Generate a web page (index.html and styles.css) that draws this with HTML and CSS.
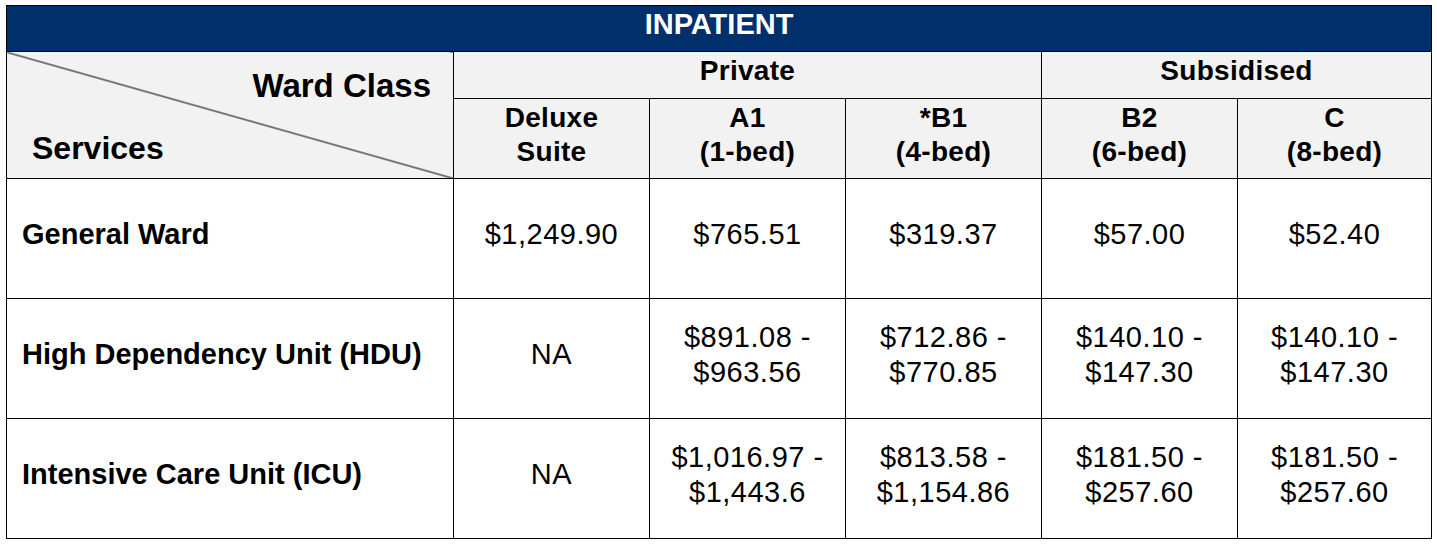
FILE: index.html
```html
<!DOCTYPE html>
<html>
<head>
<meta charset="utf-8">
<link rel="stylesheet" href="styles.css">
</head>
<body>
<table class="rates">
  <colgroup>
    <col class="c-label">
    <col class="c-val">
    <col class="c-val">
    <col class="c-val">
    <col class="c-val">
    <col class="c-last">
  </colgroup>
  <tr class="r-title">
    <th colspan="6" class="title">INPATIENT</th>
  </tr>
  <tr class="r-h1">
    <th rowspan="2" class="corner">
      <div class="wc">Ward Class</div>
      <div class="sv">Services</div>
    </th>
    <th colspan="3" class="grp">Private</th>
    <th colspan="2" class="grp">Subsidised</th>
  </tr>
  <tr class="r-h2">
    <th class="sub">Deluxe<br>Suite</th>
    <th class="sub">A1<br>(1-bed)</th>
    <th class="sub">*B1<br>(4-bed)</th>
    <th class="sub">B2<br>(6-bed)</th>
    <th class="sub">C<br>(8-bed)</th>
  </tr>
  <tr class="r-body">
    <th class="label">General Ward</th>
    <td>$1,249.90</td>
    <td>$765.51</td>
    <td>$319.37</td>
    <td>$57.00</td>
    <td>$52.40</td>
  </tr>
  <tr class="r-body">
    <th class="label">High Dependency Unit (HDU)</th>
    <td>NA</td>
    <td>$891.08 -<br>$963.56</td>
    <td>$712.86 -<br>$770.85</td>
    <td>$140.10 -<br>$147.30</td>
    <td>$140.10 -<br>$147.30</td>
  </tr>
  <tr class="r-body">
    <th class="label">Intensive Care Unit (ICU)</th>
    <td>NA</td>
    <td>$1,016.97 -<br>$1,443.6</td>
    <td>$813.58 -<br>$1,154.86</td>
    <td>$181.50 -<br>$257.60</td>
    <td>$181.50 -<br>$257.60</td>
  </tr>
</table>
</body>
</html>
```

FILE: styles.css
```css
html, body {
  margin: 0;
  padding: 0;
  background: #ffffff;
}

body {
  font-family: "Liberation Sans", Arial, sans-serif;
  color: #000;
}

.rates {
  border-collapse: collapse;
  table-layout: fixed;
  width: 1425px;
  margin: 5px 0 0 6px;
}

.c-label { width: 447px; }
.c-val { width: 196px; }
.c-last { width: 194px; }

.rates th,
.rates td {
  border: 1px solid #000;
  padding: 0 0 8px 0;
  text-align: center;
  vertical-align: middle;
}

.r-title { height: 46px; }
.r-h1 { height: 47px; }
.r-h2 { height: 80px; }
.r-body { height: 120px; }

.title {
  background: #00306b;
  color: #fff;
  font-size: 29px;
  font-weight: bold;
  padding: 0 0 10px 0 !important;
  line-height: 34px;
}

.corner {
  background-color: #f2f2f2;
  background-image: linear-gradient(to top right, transparent calc(50% - 1px), #000 50%, transparent calc(50% + 1px));
  vertical-align: top !important;
  padding: 15px 0 0 0 !important;
  font-size: 33px;
  font-weight: bold;
  line-height: 38px;
}

.wc {
  text-align: right;
  padding-right: 22px;
}

.sv {
  text-align: left;
  padding-left: 25px;
  margin-top: 24px;
  font-size: 32px;
}

.grp {
  background: #f2f2f2;
  font-size: 28px;
  font-weight: bold;
  line-height: 34px;
  letter-spacing: 0.3px;
}

.sub {
  background: #f2f2f2;
  font-size: 28px;
  font-weight: bold;
  line-height: 34px;
  letter-spacing: 0.3px;
}

.label {
  text-align: left !important;
  padding-left: 15px !important;
  font-size: 29px;
  font-weight: bold;
  line-height: 35px;
}

.rates td {
  font-size: 29px;
  line-height: 35px;
  letter-spacing: 0.5px;
  font-weight: normal;
}
```
